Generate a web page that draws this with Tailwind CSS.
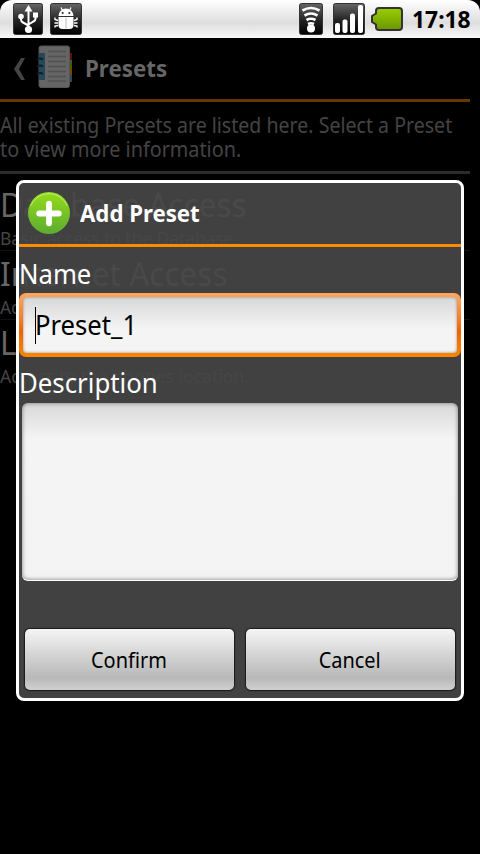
<!DOCTYPE html>
<html lang="en">
<head>
<meta charset="utf-8">
<title>Add Preset</title>
<script src="https://cdn.jsdelivr.net/npm/@tailwindcss/browser@4"></script>
</head>
<body class="bg-black">
<div class="relative w-[480px] h-[854px] overflow-hidden bg-black font-['Noto_Sans','Open_Sans',sans-serif]">
  <!-- Status bar -->
  <header class="flex items-center h-[38px] rounded-t-[12px] bg-linear-to-b from-white via-[#dedede] via-60% to-[#f8f8f8] pl-[13px] pr-[9px]">
    <svg class="w-[30px] h-8 mr-[7px]" viewBox="0 0 30 32">
      <defs><linearGradient id="tile" x1="0" y1="0" x2="0" y2="1"><stop offset="0" stop-color="#666"/><stop offset=".55" stop-color="#222"/><stop offset="1" stop-color="#000"/></linearGradient></defs>
      <rect x=".5" y=".5" width="29" height="31" rx="2" fill="url(#tile)" stroke="#333"/>
      <path d="M15.500 6v21M8 14v2.500q0 2 2 3l5.500 3M22.500 12v3.500q0 2-2 3l-5 3" fill="none" stroke="#fff" stroke-width="2"/>
      <path d="M15.500 2l4 6.500h-8z" fill="#fff"/><circle cx="15.500" cy="26.500" r="3.600" fill="#fff"/><circle cx="8" cy="13.500" r="2.800" fill="#fff"/><rect x="20" y="9.500" width="5" height="5" fill="#fff"/>
    </svg>
    <svg class="w-8 h-8" viewBox="0 0 32 32">
      <rect x=".5" y=".5" width="31" height="31" rx="2" fill="url(#tile)" stroke="#333"/>
      <path d="M8.500 13a7.500 7.500 0 0 1 15 0z" fill="#fff"/><path d="M12.500 7.500L11 4.500M19.500 7.500L21 4.500" stroke="#fff" stroke-width="1.300"/>
      <circle cx="12.700" cy="10" r="1" fill="#222"/><circle cx="19.300" cy="10" r="1" fill="#222"/>
      <path d="M8.500 14h15v8q0 4-4 4h-7q-4 0-4-4z" fill="#fff"/><path d="M16 14.500v11" stroke="#bbb"/>
      <path d="M8 17.500L5 16.500v-2M8 20H4.500M8 22.500L5 23v1.500M24 17.500l3-1v-2M24 20h3.500M24 22.500l3 .5v1.500" fill="none" stroke="#fff" stroke-width="1.400"/>
    </svg>
    <div class="flex-1"></div>
    <svg class="w-6 h-8 mr-[10px]" viewBox="0 0 24 32">
      <rect x=".5" y=".5" width="23" height="31" rx="2" fill="url(#tile)" stroke="#333"/>
      <path d="M3.500 7.500Q12 2.500 20.500 7.500M5.500 12.500Q12 8.500 18.500 12.500M7.500 17Q12 14.500 16.500 17M9 21Q12 19.500 15 21" fill="none" stroke="#fff" stroke-width="2.700"/><circle cx="12" cy="25.500" r="4" fill="#fff"/>
    </svg>
    <svg class="w-8 h-8 mr-[6px]" viewBox="0 0 32 32">
      <rect x=".5" y=".5" width="31" height="31" rx="2" fill="url(#tile)" stroke="#333"/>
      <g fill="#fff"><rect x="2" y="20" width="5" height="10" rx="2"/><rect x="9.500" y="16.500" width="5" height="13.500" rx="2"/><rect x="17" y="10.500" width="5" height="19.500" rx="2"/><rect x="25" y="2" width="5" height="28" rx="2"/></g>
    </svg>
    <svg class="w-8 h-6" viewBox="0 0 32 24">
      <defs><linearGradient id="bat" x1="0" y1="0" x2="0" y2="1"><stop offset="0" stop-color="#98d000"/><stop offset="1" stop-color="#6d9500"/></linearGradient></defs>
      <path d="M8 1h20q3 0 3 3v16q0 3-3 3H8q-3 0-3-3v-2.500l-4-2.500V9l4-2.500V4q0-3 3-3z" fill="url(#bat)" stroke="#333" stroke-width="2"/>
    </svg>
    <div class="w-[68px] flex justify-end text-[24px] font-bold text-black leading-none"><span class="inline-block origin-right scale-x-[.95]">17:18</span></div>
  </header>

  <!-- Presets screen, dimmed behind the dialog -->
  <main class="w-[470px]">
    <div class="flex items-center h-[61px] pl-[14px]">
      <svg class="w-3 h-[22px] mr-[10px]" viewBox="0 0 12 22"><path d="M7 0h4L5 11l6 11H7L0 11z" fill="#444"/></svg>
      <svg class="w-9 h-11 mb-[3px] ml-px" viewBox="0 0 36 44">
        <rect x="31" y="8" width="4" height="7" fill="#5a1010"/><rect x="31" y="15" width="4" height="7" fill="#376010"/><rect x="31" y="22" width="4" height="8" fill="#744700"/><rect x="31" y="30" width="4" height="7" fill="#28495a"/>
        <rect x="2" y="1" width="30.500" height="41.500" rx="2" fill="#656565" stroke="#555"/>
        <rect x="2" y="8" width="6" height="27" fill="#24485a"/>
        <path d="M11 6.500h18M11 11.500h18M11 16.500h18M11 21.500h18M11 26.500h18M11 31.500h18M11 36h18" stroke="#505050" stroke-width="1.300"/>
        <path d="M0 14.500q3-2 6 0M0 21.500q3-2 6 0M0 29q3-2 6 0" stroke="#111d24" stroke-width="2" fill="none"/>
      </svg>
      <span class="ml-[12px] mb-[2px] inline-block origin-left scale-x-[.93] text-[24px] font-bold text-[#666]">Presets</span>
    </div>
    <div class="h-[3px] bg-[#663800]"></div>
    <p class="h-[69px] pt-[11px] text-[21px] leading-[24px] text-[#444] whitespace-nowrap"><span class="block origin-left scale-x-[.932]">All existing Presets are listed here. Select a Preset</span><span class="block origin-left scale-x-[.943]">to view more information.</span></p>
    <div class="h-[3px] bg-[#2c2c2c]"></div>
    <ul class="pt-[8px] whitespace-nowrap text-[#666]">
      <li class="h-[69px] border-b border-[#111]"><div class="h-[46px] text-[33px] leading-[46px]"><span class="inline-block origin-left scale-x-[.957]">Database Access</span></div><div class="text-[18px] leading-[20px] text-[#444]"><span class="inline-block origin-left scale-x-[.965]">Basic access to the Database.</span></div></li>
      <li class="h-[69px] border-b border-[#111]"><div class="h-[46px] text-[33px] leading-[46px]"><span class="inline-block origin-left scale-x-[.955]">Internet Access</span></div><div class="text-[18px] leading-[20px] text-[#444]"><span class="inline-block origin-left scale-x-[.965]">Access to the Internet.</span></div></li>
      <li class="h-[69px]"><div class="h-[46px] text-[33px] leading-[46px]"><span class="inline-block origin-left scale-x-[.95]">Location</span></div><div class="text-[18px] leading-[20px] text-[#444]"><span class="inline-block origin-left scale-x-[.975]">Access to the phones location.</span></div></li>
    </ul>
  </main>

  <!-- Dialog -->
  <section class="absolute left-[16px] top-[180px] w-[448px] h-[521px] rounded-[8px] border-3 border-white bg-[#474747]/92 bg-clip-padding flex flex-col text-white">
    <div class="flex items-center h-[61px] pl-[9px] pb-[2px]">
      <svg class="w-[42px] h-[42px]" viewBox="0 0 43 43">
        <defs><linearGradient id="add" x1="0" y1="0" x2="0" y2="1"><stop offset="0" stop-color="#94dc1c"/><stop offset="1" stop-color="#5cab30"/></linearGradient></defs>
        <circle cx="21.500" cy="21.500" r="21.500" fill="url(#add)"/><path d="M3 14a20 20 0 0 1 37 0" fill="none" stroke="#c0ee70" stroke-width="1"/>
        <path d="M21.500 12v20M11.500 22h20" stroke="#fff" stroke-width="6" stroke-linecap="round"/>
      </svg>
      <h1 class="ml-[10px] text-[24px] font-bold leading-none"><span class="inline-block origin-left scale-x-[.925]">Add Preset</span></h1>
    </div>
    <div class="h-[3px] bg-[#ff8c00]"></div>
    <label class="h-[46px] pt-[9px] text-[27px] leading-[36px]"><span class="inline-block origin-left scale-x-[.95]">Name</span></label>
    <div class="h-[64px] rounded-[7px] p-[4px] bg-linear-to-b from-[#ffa75a] via-[#ee6500] via-60% to-[#ff8500]">
      <div class="h-full rounded-[4px] bg-linear-to-b from-[#d8d8d8] via-[#f5f5f5] via-60% to-[#f3f3f3] inset-shadow-[0_0_3px_#888] flex items-center pl-[12px] text-black text-[27px]">
        <span class="w-px h-[37px] bg-black"></span><span class="-ml-px inline-block origin-left scale-x-[.95]">Preset_1</span>
      </div>
    </div>
    <label class="h-[46px] pt-[8px] text-[27px] leading-[36px]"><span class="inline-block origin-left scale-x-[.955]">Description</span></label>
    <div class="mx-[3px] h-[178px] rounded-[6px] border-b border-white bg-linear-to-b from-[#d8d8d8] via-[#f4f4f4] via-20% to-[#f3f3f3] inset-shadow-[0_0_4px_#777]"></div>
    <div class="mt-[48px] px-[6px] flex gap-[12px] text-black text-[21px]">
      <div class="flex-1 h-[61px] pt-[2px] pr-[2px] rounded-[5px] bg-linear-to-b from-[#f5f5f5] via-[#b8b8b8] via-80% to-[#d0d0d0] shadow-[0_0_1px_1px_#1a1a1a] flex items-center justify-center"><span class="inline-block scale-x-[.95]">Confirm</span></div>
      <div class="flex-1 h-[61px] pt-[2px] pr-[2px] rounded-[5px] bg-linear-to-b from-[#f5f5f5] via-[#b8b8b8] via-80% to-[#d0d0d0] shadow-[0_0_1px_1px_#1a1a1a] flex items-center justify-center"><span class="inline-block scale-x-[.95]">Cancel</span></div>
    </div>
  </section>
</div>
</body>
</html>
